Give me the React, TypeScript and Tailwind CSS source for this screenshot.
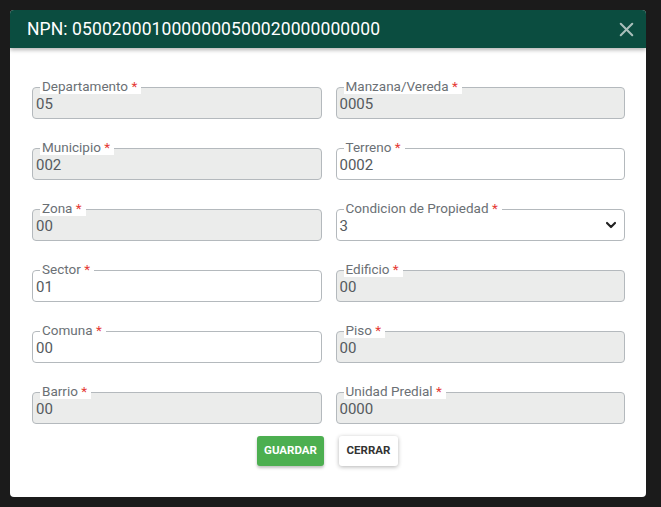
import React from 'react';
import { X, ChevronDown } from 'lucide-react';

interface FieldProps {
  label: string;
  value: string;
  disabled?: boolean;
  select?: boolean;
}

function Field({ label, value, disabled, select }: FieldProps) {
  return (
    <div className="relative">
      <div
        className={`h-[32px] border border-[#b4b9bd] rounded-[4px] flex items-center justify-between pl-[3px] pr-[5px] text-[15px] text-[#555a5e] ${
          disabled ? 'bg-[#ebeceb]' : 'bg-white'
        }`}
      >
        <span className="mt-[3px]">{value}</span>
        {select && <ChevronDown className="w-[16px] h-[16px] text-[#222]" strokeWidth={3.2} />}
      </div>
      <span className="absolute left-[8px] top-[-9px] bg-white pl-[2px] pr-[4px] text-[13.5px] leading-[16px] text-[#6b7075]">
        {label} <span className="text-[#e53935]">*</span>
      </span>
    </div>
  );
}

const fields: FieldProps[] = [
  { label: 'Departamento', value: '05', disabled: true },
  { label: 'Manzana/Vereda', value: '0005', disabled: true },
  { label: 'Municipio', value: '002', disabled: true },
  { label: 'Terreno', value: '0002' },
  { label: 'Zona', value: '00', disabled: true },
  { label: 'Condicion de Propiedad', value: '3', select: true },
  { label: 'Sector', value: '01' },
  { label: 'Edificio', value: '00', disabled: true },
  { label: 'Comuna', value: '00' },
  { label: 'Piso', value: '00', disabled: true },
  { label: 'Barrio', value: '00', disabled: true },
  { label: 'Unidad Predial', value: '0000', disabled: true },
];

export default function App() {
  return (
    <div className="w-[661px] h-[507px] bg-[#1b1b1b] pt-[10px] pl-[10px] font-['Roboto',sans-serif]">
      <div className="w-[636px] h-[487px] bg-white rounded-[4px] overflow-hidden flex flex-col">
        <div className="h-[38px] bg-[#0b4d40] flex items-center justify-between pl-[17px] pr-[8px] shadow-[0_2px_4px_rgba(0,0,0,0.3)] relative z-10">
          <h2 className="text-white text-[17.5px] tracking-[0.1px]">NPN: 0500200010000000500020000000000</h2>
          <X className="w-[23px] h-[23px] text-[#a9bfba]" strokeWidth={2.2} />
        </div>
        <div className="pt-[39px] px-[22px] pr-[21px]">
          <div className="grid grid-cols-2 gap-x-[14px] gap-y-[29px]">
            {fields.map((f) => (
              <Field key={f.label} {...f} />
            ))}
          </div>
          <div className="flex justify-center gap-[15px] mt-[12px] pr-[2px]">
            <button className="h-[30px] w-[67px] bg-[#4caf50] text-white text-[11.5px] font-bold rounded-[3px] shadow-[0_2px_3px_rgba(0,0,0,0.25)]">
              GUARDAR
            </button>
            <button className="h-[30px] w-[59px] bg-white text-[#333] text-[11.5px] font-bold rounded-[3px] shadow-[0_1px_4px_rgba(0,0,0,0.3)]">
              CERRAR
            </button>
          </div>
        </div>
      </div>
    </div>
  );
}
